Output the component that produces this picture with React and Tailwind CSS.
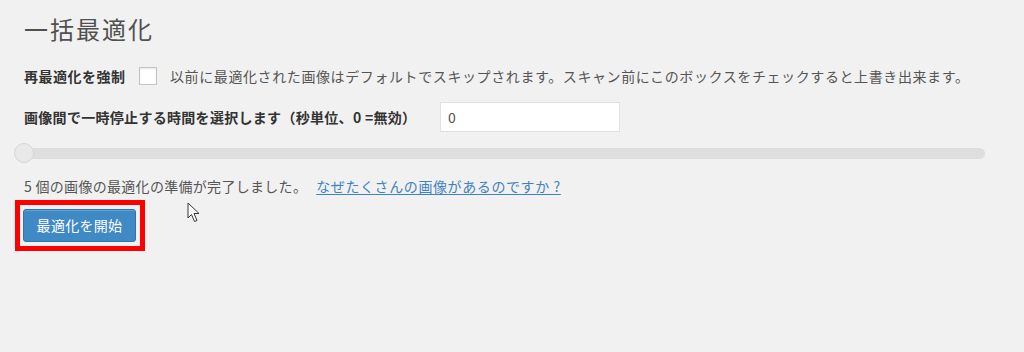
import React from "react";

const jp = { fontFamily: '"Noto Sans CJK JP", "Noto Sans", sans-serif' };

export default function App() {
  return (
    <div
      className="relative w-full h-[352px] bg-[#f1f1f1] pt-[14px] overflow-hidden"
      style={jp}
    >
      <h1 className="pl-[24px] h-[30px] text-[24px] leading-[30px] tracking-[2px] text-[#505050] font-normal">
        一括最適化
      </h1>

      <div className="mt-[23px] pl-[24px] flex items-center h-[18px] text-[14px] tracking-[0.5px]">
        <span className="font-bold text-[#333] w-[115px]">再最適化を強制</span>
        <span className="w-[18px] h-[18px] bg-white border border-[#c4c4c4] shadow-[inset_0_1px_2px_rgba(0,0,0,0.1)]" />
        <span className="ml-[13px] text-[#555] tracking-[0.6px]">
          以前に最適化された画像はデフォルトでスキップされます。スキャン前にこのボックスをチェックすると上書き出来ます。
        </span>
      </div>

      <div className="mt-[17px] pl-[24px] flex items-center h-[30px] text-[14px] tracking-[0.3px]">
        <span className="font-bold text-[#333] w-[416px]">
          画像間で一時停止する時間を選択します（秒単位、0 =無効）
        </span>
        <div className="w-[180px] h-[30px] bg-white border border-[#e0e0e0] flex items-center pl-[7px] text-[#555] text-[14px]">
          0
        </div>
      </div>

      <div className="mt-[11px] relative h-[20px] flex items-center">
        <div className="ml-[16px] w-[969px] h-[11px] rounded-full bg-[#dedede]" />
        <div className="absolute left-[14px] top-0 w-[20px] h-[20px] rounded-full bg-[#e9e9e9] border border-[#d6d6d6]" />
      </div>

      <div className="mt-[13px] pl-[24px] h-[20px] leading-[20px] text-[14px] tracking-[0.3px] text-[#555] flex">
        <span>5 個の画像の最適化の準備が完了しました。</span>
        <a className="ml-[9px] text-[#3f82c2] underline underline-offset-2 tracking-[0.6px]" href="#">
          なぜたくさんの画像があるのですか ?
        </a>
      </div>

      <div className="mt-[4px] ml-[15px] w-[130px] h-[51px] border-[5px] border-[#ff0000] pl-[3px] pt-[4px]">
        <div className="w-[113px] h-[33px] rounded-[3px] bg-[#3f89c5] border border-[#2f74ad] shadow-[inset_0_1px_0_rgba(120,180,230,0.6)] flex items-center justify-center text-white text-[14px] tracking-[0.3px]">
          最適化を開始
        </div>
      </div>

      <svg
        className="absolute left-[187px] top-[202px]"
        width="16"
        height="22"
        viewBox="0 0 16 22"
      >
        <path
          d="M1 1 L1 16 L4.5 12.5 L7.5 19.5 L10 18.5 L7 11.5 L12 11.5 Z"
          fill="#fff"
          stroke="#333"
          strokeWidth="1"
          strokeLinejoin="round"
        />
      </svg>
    </div>
  );
}
